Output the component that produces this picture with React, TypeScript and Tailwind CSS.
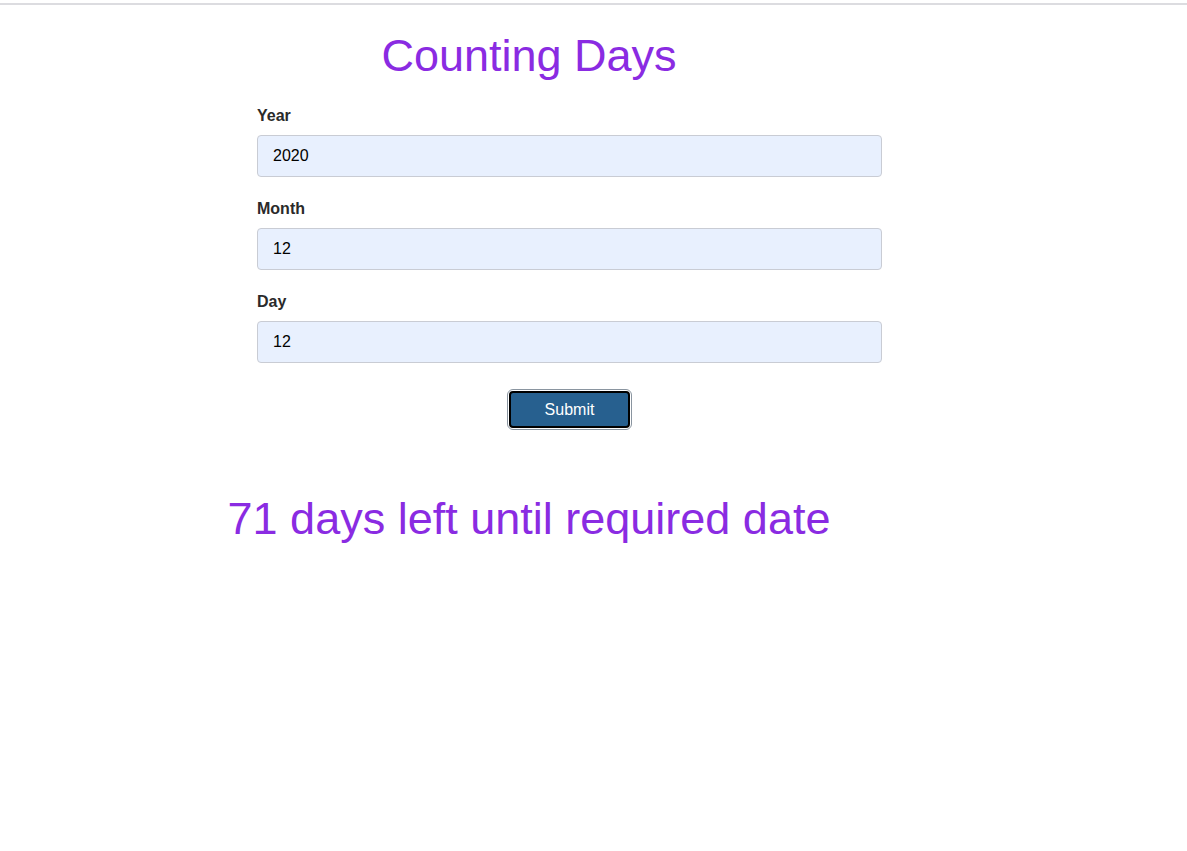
import { useState } from "react";

const fields = [
  { label: "Year", value: "2020" },
  { label: "Month", value: "12" },
  { label: "Day", value: "12" },
];

export default function App() {
  const [values, setValues] = useState(fields.map(f => f.value));

  return (
    <div className="min-h-screen bg-white font-['Liberation_Sans',Arial,sans-serif]">
      <div className="pt-[3px]">
        <div className="border-t-2 border-[#dcdce0]" />
      </div>

      <div className="w-[1058px]">
        <h1 className="mt-[25px] text-center text-[45px] leading-[52px] text-[#8a2be2]">Counting Days</h1>

        <form className="ml-[257px] mt-[22px] w-[625px]" onSubmit={e => e.preventDefault()}>
          {fields.map((f, i) => (
            <div key={f.label} className="mb-[20px]">
              <label className="block text-[16px] font-bold leading-6 text-[#2a2a2a]">{f.label}</label>
              <input
                value={values[i]}
                onChange={e => setValues(values.map((v, j) => (j === i ? e.target.value : v)))}
                className="mt-[7px] block h-[42px] w-full rounded-[4px] border border-[#c9ccd4] bg-[#e8f0fe] px-[15px] text-[16px] text-black outline-none"
              />
            </div>
          ))}
          <div className="flex justify-center pt-[8px]">
            <button
              type="submit"
              className="h-[37px] w-[121px] rounded-[4px] border-2 border-black bg-[#27608f] text-[16px] text-white outline outline-1 outline-offset-1 outline-[#8a95a0]"
            >
              Submit
            </button>
          </div>
        </form>

        <p className="mt-[65px] text-center text-[45px] leading-[52px] text-[#8a2be2]">71 days left until required date</p>
      </div>
    </div>
  );
}
